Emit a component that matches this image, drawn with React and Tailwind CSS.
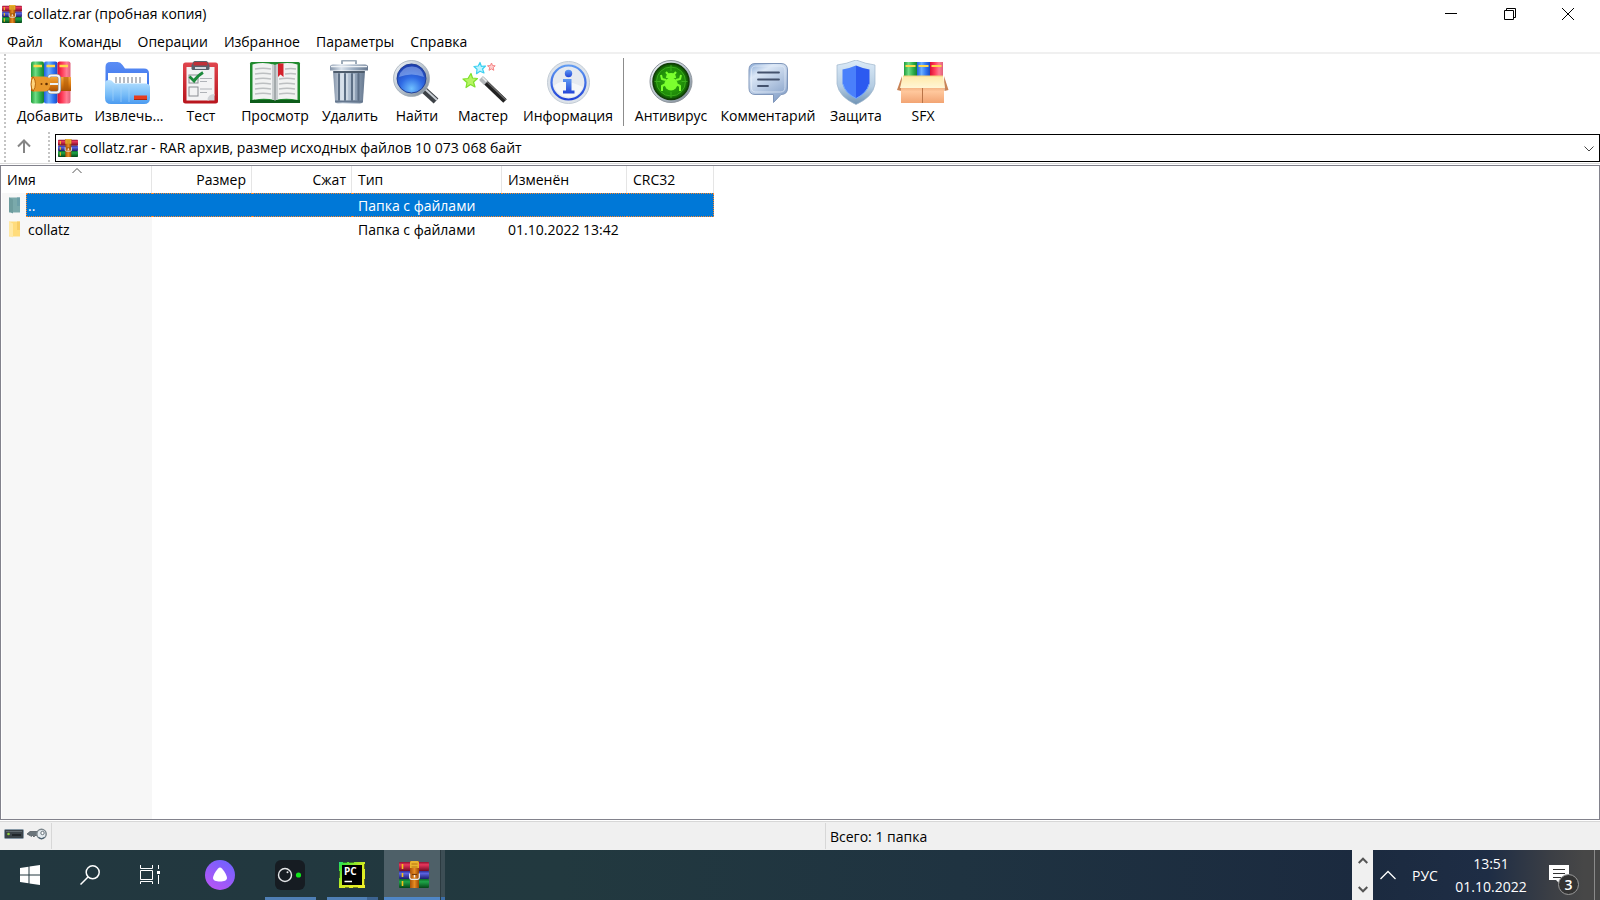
import React from "react";
import clsx from "clsx";

const Gradients = () => (
  <svg width="0" height="0" className="absolute" aria-hidden="true">
    <defs>
      <linearGradient id="green">
        <stop offset="0" stopColor="#1f9d3c" />
        <stop offset="0.35" stopColor="#6fdc84" />
        <stop offset="0.7" stopColor="#2fb04c" />
        <stop offset="1" stopColor="#17802e" />
      </linearGradient>
      <linearGradient id="blue">
        <stop offset="0" stopColor="#1f5fe0" />
        <stop offset="0.35" stopColor="#6aaeff" />
        <stop offset="0.7" stopColor="#2f74f0" />
        <stop offset="1" stopColor="#1a4bc4" />
      </linearGradient>
      <linearGradient id="red">
        <stop offset="0" stopColor="#d80f35" />
        <stop offset="0.35" stopColor="#ff3b58" />
        <stop offset="0.7" stopColor="#ff7d94" />
        <stop offset="1" stopColor="#e0607a" />
      </linearGradient>
      <linearGradient id="belt" x2="0" y2="1">
        <stop offset="0" stopColor="#f3a73c" />
        <stop offset="0.5" stopColor="#dd7d12" />
        <stop offset="1" stopColor="#a95005" />
      </linearGradient>
      <linearGradient id="folder" x2="0" y2="1">
        <stop offset="0" stopColor="#b9e2ff" />
        <stop offset="0.6" stopColor="#78bdf8" />
        <stop offset="1" stopColor="#4a9af0" />
      </linearGradient>
      <linearGradient id="folderBack" x2="0" y2="1">
        <stop offset="0" stopColor="#5b8df5" />
        <stop offset="1" stopColor="#2e6be6" />
      </linearGradient>
      <linearGradient id="clip" x2="0" y2="1">
        <stop offset="0" stopColor="#e0454d" />
        <stop offset="1" stopColor="#b8141c" />
      </linearGradient>
      <linearGradient id="steel">
        <stop offset="0" stopColor="#8393a8" />
        <stop offset="0.3" stopColor="#d9e2ec" />
        <stop offset="0.6" stopColor="#9fb0c4" />
        <stop offset="1" stopColor="#66788f" />
      </linearGradient>
      <linearGradient id="rim" x2="1" y2="1">
        <stop offset="0" stopColor="#f4f7fa" />
        <stop offset="0.5" stopColor="#b9c4cf" />
        <stop offset="1" stopColor="#77838f" />
      </linearGradient>
      <radialGradient id="lens" cx="0.5" cy="0.85" r="0.8">
        <stop offset="0" stopColor="#6fc0ff" />
        <stop offset="0.5" stopColor="#2f6ae4" />
        <stop offset="1" stopColor="#1d3fb0" />
      </radialGradient>
      <linearGradient id="info" x2="0" y2="1">
        <stop offset="0" stopColor="#5f9af2" />
        <stop offset="1" stopColor="#2345d8" />
      </linearGradient>
      <radialGradient id="radar">
        <stop offset="0" stopColor="#35b512" />
        <stop offset="0.75" stopColor="#1e8a08" />
        <stop offset="1" stopColor="#0c4a03" />
      </radialGradient>
      <linearGradient id="bubble" x2="0.6" y2="1">
        <stop offset="0" stopColor="#87a8d4" />
        <stop offset="0.3" stopColor="#dbe7f6" />
        <stop offset="1" stopColor="#8ba5cb" />
      </linearGradient>
      <linearGradient id="shieldRim" x2="0" y2="1">
        <stop offset="0" stopColor="#dcebf8" />
        <stop offset="0.6" stopColor="#b4cce2" />
        <stop offset="1" stopColor="#6f93b5" />
      </linearGradient>
      <linearGradient id="box" x2="0" y2="1">
        <stop offset="0" stopColor="#e8a06c" />
        <stop offset="0.4" stopColor="#ffc79c" />
        <stop offset="1" stopColor="#f2a473" />
      </linearGradient>
      <linearGradient id="boxLid" x2="0" y2="1">
        <stop offset="0" stopColor="#ffe9a8" />
        <stop offset="1" stopColor="#fff6d6" />
      </linearGradient>
      <linearGradient id="alice" x1="0.8" y1="0" x2="0.2" y2="1">
        <stop offset="0" stopColor="#6f62ff" />
        <stop offset="1" stopColor="#b955f5" />
      </linearGradient>
      <linearGradient id="pycharm" x2="1" y2="1">
        <stop offset="0" stopColor="#21d789" />
        <stop offset="0.12" stopColor="#3be03a" />
        <stop offset="0.5" stopColor="#d0ec20" />
        <stop offset="1" stopColor="#f4f02a" />
      </linearGradient>
      <linearGradient id="bookRed" x2="0" y2="1">
        <stop offset="0" stopColor="#8f1230" />
        <stop offset="0.3" stopColor="#e8375c" />
        <stop offset="1" stopColor="#700a24" />
      </linearGradient>
      <linearGradient id="bookBlue" x2="0" y2="1">
        <stop offset="0" stopColor="#2b2f94" />
        <stop offset="0.3" stopColor="#5a62e0" />
        <stop offset="1" stopColor="#1c1d6b" />
      </linearGradient>
      <linearGradient id="bookGreen" x2="0" y2="1">
        <stop offset="0" stopColor="#0c6b28" />
        <stop offset="0.3" stopColor="#1fa548" />
        <stop offset="1" stopColor="#064517" />
      </linearGradient>
      <linearGradient id="strap">
        <stop offset="0" stopColor="#a85208" />
        <stop offset="0.5" stopColor="#e88c22" />
        <stop offset="1" stopColor="#964605" />
      </linearGradient>
    </defs>
  </svg>
);

const RarIcon = ({ className }) => (
  <svg viewBox="0 0 30 27" preserveAspectRatio="none" className={className} aria-hidden="true">
    <rect x="0" y="1" width="30" height="9" rx="1" fill="url(#bookRed)" />
    <rect x="0" y="10" width="30" height="8" rx="1" fill="url(#bookBlue)" />
    <rect x="0" y="18" width="30" height="9" rx="1" fill="url(#bookGreen)" />
    <path d="M3.5 3v5M3.5 12v4M3.5 20v5" stroke="#f5c21b" strokeWidth="1.6" />
    <rect x="11" y="0" width="9" height="27" fill="url(#strap)" />
    <path d="M11 1.5q0-1.5 1.5-1.5h6q1.5 0 1.5 1.5V7h-9z" fill="#e9b52e" />
    <path d="M12.5 3h6M12.5 6h6" stroke="#b87412" />
    <path d="M10.7 12.5v4q0 1.8 1.8 1.8h6q1.8 0 1.8-1.8v-4" fill="none" stroke="#e6e9ec" strokeWidth="1.3" />
    <path d="M13 13.500h5" stroke="#7a3d08" strokeWidth="1.2" />
    <path d="M15.5 14v2.500" stroke="#f4f4f4" strokeWidth="1.4" />
  </svg>
);

const ToolSvg = ({ children }) => (
  <svg viewBox="0 0 52 45" className="block h-[45px] w-[52px]" aria-hidden="true">
    {children}
  </svg>
);

const AddIcon = () => (
  <ToolSvg>
    <rect x="7" y="1.5" width="13" height="42" rx="2" fill="url(#green)" />
    <rect x="20" y="1.5" width="13.5" height="42" rx="2" fill="url(#blue)" />
    <rect x="33.5" y="1.5" width="13" height="42" rx="2" fill="url(#red)" />
    <path d="M9.5 6h8.5M22.5 6h8.5M35.5 6h8.5" stroke="#ffd84a" strokeWidth="2.4" />
    <path d="M7 17h40v14H7z" fill="url(#belt)" />
    <path d="M9 16.5h12q4 0 6 7q-2 8-6 8H9q-2-7 0-15z" fill="#e8982c" />
    <path d="M9 16.5q5 7 0 15q-4-7 0-15z" fill="#ffd47e" stroke="#b9680d" />
    <circle cx="17.5" cy="24" r="1" fill="#7a3b02" />
    <circle cx="22.5" cy="24" r="1.3" fill="#5c2c02" />
    <path d="M25 17.5q0-2 2-2h5.5q3 0 3 3v11q0 3-3 3H27q-2 0-2-2" fill="none" stroke="#7d828a" strokeWidth="3.2" />
    <path d="M25 17.5q0-2 2-2h5.5q3 0 3 3v11q0 3-3 3H27q-2 0-2-2" fill="none" stroke="#f5f6f8" strokeWidth="2" />
    <path d="M26 24h8" stroke="#eceff2" strokeWidth="2" />
    <path d="M42 17v14" stroke="#ad5807" strokeWidth="5" opacity="0.55" />
  </ToolSvg>
);

const ExtractIcon = () => (
  <ToolSvg>
    <path d="M2.5 7q0-5 5-5h7q3 0 5 3l2.5 3.5h19q5 0 5 5V36H2.5z" fill="url(#folderBack)" />
    <path d="M5 13h39v14H5z" fill="#fff" />
    <path d="M12 17h2v6h-2zM16 17h2v6h-2zM20 17h2v6h-2zM24 17h2v6h-2zM28 17h2v6h-2zM32 17h2v6h-2zM36 17h2v6h-2z" fill="#b7bbc2" />
    <path d="M2 23q0-3 4-3q3 0 4 2q1 1.5 3 1.5h29q5 0 5 3.5V38q0 6-6 6H8q-6 0-6-6z" fill="url(#folder)" />
    <path d="M10 27v14M18 27v15M26 27v15" stroke="#a8d6fb" opacity="0.6" />
    <rect x="31" y="35.5" width="13" height="4" fill="#e63c1e" />
    <path d="M31 39.5h13" stroke="#a52812" />
  </ToolSvg>
);

const TestIcon = () => (
  <ToolSvg>
    <rect x="8" y="2.5" width="35" height="41" rx="2.5" fill="url(#clip)" />
    <path d="M11.5 7h28v28q-1 4-6 5.5h-22z" fill="#f3f3f4" />
    <path d="M39.5 34q-7 0-7 6.5h7z" fill="#cfd2d6" />
    <rect x="16.5" y="4" width="18" height="6" rx="1.5" fill="#59616b" />
    <path d="M18 3.5q0-2 2-2h11q2 0 2 2V6H18z" fill="#c03038" stroke="#59616b" />
    <path d="M20 8h11" stroke="#d5dae0" strokeWidth="2" />
    <rect x="14" y="15" width="9" height="8" fill="none" stroke="#8a8d92" />
    <rect x="14" y="27" width="9" height="9" fill="none" stroke="#8a8d92" />
    <path d="M25 18.5h12M25 21.5h7M25 29h12M25 32.5h7" stroke="#b0b3b8" />
    <path d="M14.5 16.5l4.5 4.5q3-5 9-8.5" fill="none" stroke="#1d8a3c" strokeWidth="2.8" />
  </ToolSvg>
);

const ViewIcon = () => (
  <ToolSvg>
    <rect x="1" y="2" width="50" height="41" rx="1.5" fill="#1f8a2e" />
    <path d="M1 40h50v3H1z" fill="#0d5c1a" />
    <path d="M3.5 4.5q11-3 22.5.5q11-3.5 22.5-.5V40q-11-2.5-22.5 0q-11-2.5-22.5 0z" fill="#f1f2f2" />
    <path d="M23 4.5q3 0 3 1q0-1 3-1v35q-3 0-3 1q0-1-3-1z" fill="#c9cdcf" />
    <path d="M26 5v36" stroke="#7f8688" />
    <path d="M6 9q8-1.5 16 0M6 14q8-1.5 16 0M6 19q8-1.5 16 0M6 24q8-1.5 16 0M6 29q8-1.5 16 0M6 34q8-1.5 16 0" fill="none" stroke="#bcbfc1" strokeWidth="1.3" />
    <path d="M36 9q6-1 11 0M36 14q6-1 11 0M30 19q8-1.5 16 0M30 24q8-1.5 16 0M30 29q8-1.5 16 0M30 34q8-1.5 16 0" fill="none" stroke="#bcbfc1" strokeWidth="1.3" />
    <path d="M29 3.5h5.5V17l-3-2.5L29 17z" fill="#d3222c" />
  </ToolSvg>
);

const DeleteIcon = () => (
  <ToolSvg>
    <path d="M18 4V1.5q0-1 1-1h12q1 0 1 1V4" fill="none" stroke="#9eacba" strokeWidth="2" />
    <path d="M9 11h32l-2 30q-.5 2.5-3 2.5H14q-2.5 0-3-2.5z" fill="url(#steel)" />
    <path d="M15 14v26M21 14v26M28 14v26M34.5 14v26" stroke="#5d6f85" strokeWidth="2" strokeLinecap="round" />
    <path d="M17 14v26M23 14v26M30 14v26" stroke="#dfe7ef" />
    <path d="M9.5 12h31" stroke="#4e5c6c" strokeWidth="2" />
    <path d="M6 7q0-2.5 3-2.5h32q3 0 3 2.5v3.5H6z" fill="url(#steel)" />
    <path d="M7 6.5h36" stroke="#edf1f5" strokeWidth="1.5" />
    <path d="M11 41.5h28" stroke="#66788f" strokeWidth="2" />
  </ToolSvg>
);

const FindIcon = () => (
  <ToolSvg>
    <path d="M33 30l12 11" stroke="#3c4146" strokeWidth="7" />
    <path d="M34 29l12 11" stroke="#c9ced4" strokeWidth="2" />
    <path d="M28 27l5 4.5" stroke="#8e99a5" strokeWidth="6" />
    <circle cx="20.5" cy="18.5" r="18" fill="url(#rim)" stroke="#9aa5b0" strokeWidth="0.7" />
    <circle cx="20.5" cy="18.5" r="14.5" fill="url(#lens)" stroke="#203e96" />
    <path d="M8 17q2-10 12.5-10.5T33 17q-12.500-5-25 0z" fill="#b9d3ff" opacity="0.45" />
  </ToolSvg>
);

const WizardIcon = () => (
  <ToolSvg>
    <path d="M25 19l23 22" stroke="#222" strokeWidth="5" />
    <path d="M26 18l23 22" stroke="#6b6b6b" strokeWidth="1.2" />
    <path d="M24 18l5 5" stroke="#b5b8bb" strokeWidth="5.5" />
    <path d="M25.5 17.5l4 4" stroke="#eee" strokeWidth="1.5" />
    <path d="M14 13.500l1.500 4.500 5 .5-4 3.500 1.500 5-4.500-2.500-4.500 3 1-5-4-3.500 5-.5z" fill="#b6f562" stroke="#7fe02c" strokeWidth="1.2" strokeLinejoin="round" />
    <path d="M23 2.5l1.3 3.8 4.2-.3-3 3 1.5 4-4-1.8-3.5 2.5.5-4.5-3-2.7 4.2-.5z" fill="#bff4ff" stroke="#3bd0f0" strokeWidth="1.2" strokeLinejoin="round" />
    <path d="M34.5 3l1 2.6 2.7.2-2 1.8.6 2.7-2.4-1.400-2.4 1.4.7-2.7-2.2-1.8 2.9-.2z" fill="#ffd0d0" stroke="#f58383" />
  </ToolSvg>
);

const InfoIcon = () => (
  <ToolSvg>
    <circle cx="26.5" cy="22.5" r="21" fill="#dde3ea" stroke="#c3ccd5" />
    <circle cx="26.5" cy="22.5" r="17" fill="#e6eaf0" stroke="url(#info)" strokeWidth="2.2" />
    <path d="M12 26q8-9 29 1q-4 10-14.5 10T12 26z" fill="#fff" opacity="0.6" />
    <circle cx="26.5" cy="13.5" r="3.7" fill="url(#info)" />
    <path d="M21 19h8.500v11.500h3v3H21v-3h3V22h-3z" fill="url(#info)" />
  </ToolSvg>
);

const AntivirusIcon = () => (
  <ToolSvg>
    <circle cx="26" cy="21.5" r="21" fill="url(#rim)" stroke="#8d949b" />
    <circle cx="26" cy="21.5" r="18" fill="url(#radar)" stroke="#123d08" strokeWidth="1.5" />
    <g fill="none" stroke="#4fca2a" strokeWidth="1" opacity="0.6">
      <circle cx="26" cy="21.5" r="14.5" />
      <path d="M26 5v6M26 32v6M9.5 21.5h6M36.5 21.5h6" />
    </g>
    <path d="M21 12l2.5 3M31 12l-2.5 3M21 20l-4-1-1-4M31 20l4-1 1-4M21 24l-4 2v5M31 24l4 2v5" fill="none" stroke="#7bff2e" strokeWidth="2" strokeLinejoin="round" />
    <ellipse cx="26" cy="24" rx="6.5" ry="6.5" fill="#7bff2e" />
    <path d="M21 18q0-5 5-5t5 5z" fill="#7bff2e" />
  </ToolSvg>
);

const CommentIcon = () => (
  <ToolSvg>
    <path d="M13 3.5h26q6.5 0 6.5 6.5v18q0 6.5-6.5 6.5l-7.5 8v-8H13q-6 0-6-6.5V10q0-6.5 6-6.500z" fill="url(#bubble)" stroke="#7f96ba" />
    <path d="M13.5 6h25q4.5 0 4.5 4.5v17q0 4.5-4.5 4.5h-25q-4 0-4-4.5v-17q0-4.500 4-4.500z" fill="none" stroke="#e6eefa" opacity="0.7" />
    <path d="M16 12.5h21M16 19.5h21M16 26h10" stroke="#44526d" strokeWidth="1.8" strokeLinecap="round" />
  </ToolSvg>
);

const ShieldIcon = () => (
  <ToolSvg>
    <path d="M26 0q10 4 19 5v19q-2 13-19 20.500Q9 37 7 24V5q9-1 19-5z" fill="url(#shieldRim)" stroke="#9fb6cb" strokeWidth="0.7" />
    <path d="M26 5.5q7 3 13.5 4v14q-2 9-13.5 15z" fill="#2c5af0" />
    <path d="M26 5.5q-7 3-13.5 4v14q2 9 13.5 15z" fill="#4a80fb" />
    <path d="M39 24q-2 9-13 14.5Q15 33 13 24" fill="none" stroke="#74aaff" />
  </ToolSvg>
);

const SfxIcon = () => (
  <ToolSvg>
    <rect x="7" y="2" width="13" height="17" fill="url(#green)" />
    <rect x="20" y="2" width="13" height="17" fill="url(#blue)" />
    <rect x="33" y="2" width="13" height="17" fill="url(#red)" />
    <path d="M8.5 6h10M21.5 6h10M34.5 6h10" stroke="#ffd84a" strokeWidth="2.2" />
    <path d="M5 16L0 30l4.5 1zM47 16l4.5 14-4 1z" fill="#c98457" />
    <path d="M4 24h43v19H4z" fill="url(#box)" />
    <path d="M25.5 28v15" stroke="#b97447" />
    <path d="M6 16h40l2 12H3z" fill="url(#boxLid)" />
    <path d="M6 16h40" stroke="#f3cf7a" />
  </ToolSvg>
);

const tools = [
  { label: "Добавить", icon: AddIcon, width: "w-[80px]" },
  { label: "Извлечь...", icon: ExtractIcon, width: "w-[78px]" },
  { label: "Тест", icon: TestIcon, width: "w-[66px]" },
  { label: "Просмотр", icon: ViewIcon, width: "w-[82px]" },
  { label: "Удалить", icon: DeleteIcon, width: "w-[68px]" },
  { label: "Найти", icon: FindIcon, width: "w-[66px]" },
  { label: "Мастер", icon: WizardIcon, width: "w-[66px]" },
  { label: "Информация", icon: InfoIcon, width: "w-[104px]" },
];

const extraTools = [
  { label: "Антивирус", icon: AntivirusIcon, width: "w-[86px]" },
  { label: "Комментарий", icon: CommentIcon, width: "w-[108px]" },
  { label: "Защита", icon: ShieldIcon, width: "w-[68px]" },
  { label: "SFX", icon: SfxIcon, width: "w-[66px]" },
];

const menu = ["Файл", "Команды", "Операции", "Избранное", "Параметры", "Справка"];

const rows = [
  { name: "..", type: "Папка с файлами", modified: "", selected: true },
  { name: "collatz", type: "Папка с файлами", modified: "01.10.2022 13:42" },
];

const ToolButton = ({ tool }) => {
  const Icon = tool.icon;
  return (
    <button className={clsx("flex shrink-0 flex-col items-center pt-1.5", tool.width)}>
      <Icon />
      <span className="whitespace-nowrap leading-[22px]">{tool.label}</span>
    </button>
  );
};

const Grip = () => (
  <div className="w-[2px] shrink-0 self-stretch bg-[repeating-linear-gradient(#c4c4c4_0_2px,transparent_2px_4px)]" />
);

const TitleBar = () => (
  <header className="flex h-7 items-center justify-between pl-0.5 pr-[3px]">
    <div className="flex items-center gap-[5px]">
      <RarIcon className="h-[18px] w-5" />
      <h1>collatz.rar (пробная копия)</h1>
    </div>
    <div className="flex">
      <button aria-label="Свернуть" className="flex h-7 w-[59px] items-center justify-center">
        <svg width="12" height="12" stroke="#000" fill="none"><path d="M0 5.5h12" /></svg>
      </button>
      <button aria-label="Свернуть в окно" className="flex h-7 w-[59px] items-center justify-center">
        <svg width="12" height="12" stroke="#000" fill="none"><path d="M.5 2.5h9v9h-9zM2.5 2V.5h9v9H10" /></svg>
      </button>
      <button aria-label="Закрыть" className="flex h-7 w-[58px] items-center justify-center">
        <svg width="12" height="12" stroke="#000" fill="none"><path d="M0 0l12 12M12 0L0 12" /></svg>
      </button>
    </div>
  </header>
);

const AddressBar = () => (
  <div className="flex h-[34px] items-stretch border-b border-[#d9d9d9] pl-1 pt-[2px]">
    <Grip />
    <button aria-label="Вверх" className="flex w-[42px] items-center justify-center pr-1.5 pb-[3px]">
      <svg width="14" height="15" fill="none" stroke="#858585" strokeWidth="2"><path d="M7 14V2M1 7.5l6-6 6 6" /></svg>
    </button>
    <Grip />
    <div className="relative ml-[5px] mt-[2px] mb-[1px] flex flex-1 items-center border border-black pl-[2px]">
      <RarIcon className="h-[18px] w-5 shrink-0" />
      <select aria-label="Адрес" className="ml-[5px] flex-1 appearance-none bg-transparent outline-none">
        <option>collatz.rar - RAR архив, размер исходных файлов 10 073 068 байт</option>
      </select>
      <svg width="10" height="6" className="pointer-events-none absolute right-[5px] top-[11px]" fill="none" stroke="#444"><path d="M.5.5L5 5 9.5.5" /></svg>
    </div>
  </div>
);

const FolderIcon = ({ selected }) => (
  <svg width="13" height="17" viewBox="0 0 13 17" className="block" aria-hidden="true">
    <path d="M1 .5h11v15H1z" fill={selected ? "#7aa9ab" : "#ffdc7c"} />
    <path d="M1 .5l4 2v14l-4-2z" fill={selected ? "#6d9c9e" : "#ffe9a6"} />
    <path d="M9 .5h3V9H9z" fill={selected ? "#6d9fa8" : "#f7cd66"} />
  </svg>
);

const headCell = "relative h-[27px] border-r border-[#e5e5e5] bg-white pt-px pl-1.5 pr-[5px] font-normal";

const FileList = () => (
  <main className="mt-px flex-1 border border-[#82828c] bg-[linear-gradient(to_right,#fff_1px,#f7f7f7_1px,#f7f7f7_151px,#fff_151px)]">
    <table className="w-[713px] table-fixed border-separate border-spacing-0">
      <colgroup>
        <col className="w-[25px]" />
        <col className="w-[126px]" />
        <col className="w-[100px]" />
        <col className="w-[100px]" />
        <col className="w-[150px]" />
        <col className="w-[125px]" />
        <col className="w-[87px]" />
      </colgroup>
      <thead>
        <tr>
          <th colSpan={2} className={clsx(headCell, "text-left")}>
            Имя
            <svg width="10" height="6" className="absolute left-[71px] top-[2px]" fill="none" stroke="#555"><path d="M.5 5L5 .5 9.5 5" /></svg>
          </th>
          <th className={clsx(headCell, "text-right")}>Размер</th>
          <th className={clsx(headCell, "text-right")}>Сжат</th>
          <th className={clsx(headCell, "text-left")}>Тип</th>
          <th className={clsx(headCell, "text-left")}>Изменён</th>
          <th className={clsx(headCell, "text-left")}>CRC32</th>
        </tr>
      </thead>
      <tbody>
        {rows.map((row) => {
          const cell = clsx(
            "h-6 pt-0.5 leading-5",
            row.selected && "border-y border-dotted border-[#ff8728] bg-[#0078d7] text-white"
          );
          return (
            <tr key={row.name}>
              <td className="pl-[7px]">
                <FolderIcon selected={row.selected} />
              </td>
              <td className={clsx(cell, row.selected ? "border-l pl-px" : "pl-0.5")}>{row.name}</td>
              <td className={cell} />
              <td className={cell} />
              <td className={clsx(cell, "pl-1.5")}>{row.type}</td>
              <td className={clsx(cell, "pl-1.5")}>{row.modified}</td>
              <td className={clsx(cell, row.selected && "border-r")} />
            </tr>
          );
        })}
      </tbody>
    </table>
  </main>
);

const StatusBar = () => (
  <footer className="mt-px flex h-[29px] border-t border-[#d7d7d7] bg-[#f0f0f0]">
    <div className="mt-px mb-px flex w-[52px] items-start gap-[3px] border-r border-[#d7d7d7] pl-1 pt-[5px]">
      <svg width="20" height="12" aria-hidden="true">
        <rect x=".5" y="1.5" width="19" height="9" rx="1" fill="#3b4349" stroke="#8597a5" />
        <path d="M2 3.5h16" stroke="#60696f" />
        <circle cx="4.5" cy="6" r="1.3" fill="#8fd13c" />
        <path d="M8 7h9" stroke="#20262a" strokeWidth="2" />
      </svg>
      <svg width="20" height="12" aria-hidden="true">
        <path d="M0 6l3-2.5h9v4H8L7 9 5.5 7.5 4 8.5l-1-1z" fill="#6b757b" stroke="#4a5257" strokeWidth=".7" />
        <circle cx="14.5" cy="6" r="4.7" fill="#e4eaee" stroke="#7b858b" strokeWidth="1.5" />
        <circle cx="15.5" cy="5" r="1.7" fill="#fff" stroke="#66727a" />
        <path d="M11.5 9.5q3 2.5 6 0" fill="none" stroke="#3c5566" />
      </svg>
    </div>
    <div className="mt-px mb-px w-[774px] border-r border-[#d7d7d7]" />
    <div className="flex-1 pl-1 leading-[29px]">Всего: 1 папка</div>
  </footer>
);

const Taskbar = () => (
  <nav className="flex h-[50px] items-stretch bg-[linear-gradient(to_right,#22373f_0%,#22393f_35%,#1f3341_60%,#1b2a3f_85%,#1e2d45_93%,#3c3f45_97%,#474747_99%)] text-white">
    <button aria-label="Пуск" className="flex w-[60px] items-center justify-center">
      <svg width="20" height="20" fill="#fff"><path d="M0 3l8.5-1.2v7.700H0zM9.5 1.6L20 0v9.5H9.5zM0 10.5h8.5v7.7L0 17zM9.5 10.5H20V20L9.5 18.4z" /></svg>
    </button>
    <button aria-label="Поиск" className="flex w-[60px] items-center justify-center">
      <svg width="20" height="20" fill="none" stroke="#fff" strokeWidth="1.5"><circle cx="12.7" cy="7.3" r="6.5" /><path d="M8 12L.5 19.5" /></svg>
    </button>
    <button aria-label="Представление задач" className="flex w-[60px] items-center justify-center">
      <svg width="20" height="20" fill="none" stroke="#fff">
        <path d="M.5 0v3.5h12V0M.5 19v-2.5h12V19M18.5 0v4M18.5 10v9" />
        <path d="M.5 5.5h12v9H.5z" />
        <path d="M17 6h3v3h-3z" fill="#fff" stroke="none" />
      </svg>
    </button>
    <button aria-label="Алиса" className="flex w-20 items-center justify-center">
      <svg width="30" height="30"><circle cx="15" cy="15" r="15" fill="url(#alice)" /><path d="M15 7.5c2.5 0 7 8 7 10.500s-3 3.5-7 3.5-7-1-7-3.5S12.5 7.5 15 7.5z" fill="#fff" /></svg>
    </button>
    <button aria-label="Камера" className="ml-[5px] flex w-[51px] flex-col justify-between">
      <svg width="30" height="30" className="ml-2.5 mt-2.5"><rect width="30" height="30" rx="6" fill="#161c22" /><circle cx="10" cy="15" r="6.5" fill="none" stroke="#e4e6e8" strokeWidth="1.4" /><circle cx="12.5" cy="12.3" r="1" fill="#e4e6e8" /><circle cx="23.5" cy="15" r="2.6" fill="#11e61a" /></svg>
      <span className="h-[3px] w-full bg-[#4f7fb5]" />
    </button>
    <button aria-label="PyCharm" className="ml-[11px] flex w-[51px] flex-col justify-between">
      <svg width="26" height="26" className="ml-3 mt-3">
        <rect width="26" height="26" fill="url(#pycharm)" />
        <path d="M4 0h4M10 0h5M0 9v7M26 2v5M26 17v6M6 26h4M14 26h5" stroke="#111" strokeWidth="1.2" />
        <rect x="3" y="3" width="20" height="20" fill="#000" />
        <text x="5" y="13" fill="#fff" fontSize="10" fontWeight="700" fontFamily="Open Sans, sans-serif">PC</text>
        <path d="M5.5 19.5h7.5" stroke="#fff" strokeWidth="1.5" />
      </svg>
      <span className="flex h-[3px] w-full"><span className="w-10 bg-[#4f7fb5]" /><span className="flex-1 bg-[#3c6390]" /></span>
    </button>
    <button aria-label="WinRAR" className="ml-1.5 flex w-14 flex-col justify-between bg-[#4e6068]">
      <RarIcon className="ml-[15px] mt-[11px] h-[27px] w-[30px]" />
      <span className="h-[3px] w-full bg-[#4f86c6]" />
    </button>
    <div className="flex w-[5px] flex-col justify-end border-l border-[#2b3a40] bg-[#3d4e55]">
      <span className="h-[3px] bg-[#3c6ea8]" />
    </div>
    <div className="flex-1" />
    <div className="flex w-[21px] flex-col items-center justify-between bg-[#f0f0f0] pb-[7px] pt-[7px]">
      <button aria-label="Прокрутить вверх">
        <svg width="10" height="7" className="block" fill="none" stroke="#555" strokeWidth="2"><path d="M.7 6L5 1.7 9.3 6" /></svg>
      </button>
      <button aria-label="Прокрутить вниз">
        <svg width="10" height="7" className="block" fill="none" stroke="#555" strokeWidth="2"><path d="M.7 1L5 5.3 9.3 1" /></svg>
      </button>
    </div>
    <button aria-label="Скрытые значки" className="flex w-[30px] items-center justify-center">
      <svg width="16" height="10" fill="none" stroke="#fff" strokeWidth="1.3"><path d="M.5 9L8 1.5 15.5 9" /></svg>
    </button>
    <button className="w-11 pt-px">РУС</button>
    <div className="flex w-[88px] flex-col items-center pt-0.5 leading-[23px]">
      <time>13:51</time>
      <time>01.10.2022</time>
    </div>
    <button aria-label="Уведомления" className="relative ml-3.5 w-[45px]">
      <svg width="20" height="20" className="absolute left-0 top-[15px]"><path d="M0 0h20v15h-7l-3 3-3-3H0z" fill="#fff" /><path d="M4 4.5h12M4 8.5h12M4 12.5h8" stroke="#333" /></svg>
      <span className="absolute left-[9px] top-6 flex h-[21px] w-[21px] items-center justify-center rounded-full border border-[#9a9a9a] bg-[#333] font-semibold leading-none">3</span>
    </button>
    <div className="w-1.5 border-l border-[#8a8a8a]" />
  </nav>
);

export default function App() {
  return (
    <div className="flex h-screen flex-col bg-white font-['Open_Sans','Noto_Sans',sans-serif] text-sm text-black">
      <Gradients />
      <TitleBar />
      <nav className="flex h-[26px] gap-4 border-b-2 border-[#f0f0f0] pl-[7px] pt-0.5 leading-6">
        {menu.map((item) => (
          <button key={item} className="h-6">{item}</button>
        ))}
      </nav>
      <div className="flex h-[76px] pl-1">
        <Grip />
        <div className="ml-1 flex">
          {tools.map((tool) => <ToolButton key={tool.label} tool={tool} />)}
        </div>
        <div className="mx-1 my-1 ml-[3px] w-px bg-[#8c8c8c]" />
        {extraTools.map((tool) => <ToolButton key={tool.label} tool={tool} />)}
      </div>
      <AddressBar />
      <FileList />
      <StatusBar />
      <Taskbar />
    </div>
  );
}
